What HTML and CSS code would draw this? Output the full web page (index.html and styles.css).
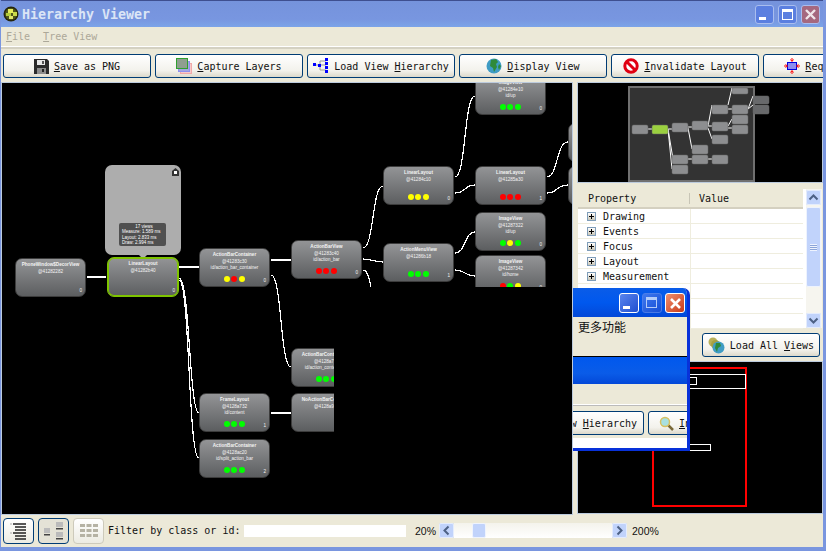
FILE: index.html
```html
<!DOCTYPE html>
<html lang="en">
<head>
    <meta charset="UTF-8">
    <title>Hierarchy Viewer</title>
    <link rel="stylesheet" href="styles.css">
</head>
<body>

<div class="window">
    <div class="titlebar">
        <svg class="app-icon" width="16" height="16" viewBox="0 0 16 16">
            <circle cx="8" cy="8" r="7.5" fill="#26260c"/>
            <circle cx="8" cy="8" r="6" fill="#50561c"/>
            <rect x="5" y="3" width="5" height="4" fill="#e6ec5a"/>
            <rect x="10" y="6" width="4" height="4" fill="#c9d94a"/>
            <rect x="3" y="7" width="5" height="3" fill="#b4cc3a"/>
            <rect x="6" y="10" width="4" height="3" fill="#e0e66a"/>
        </svg>
        <span class="title-text">Hierarchy Viewer</span>
        <div class="caption-buttons">
            <div class="cap-btn"><span class="cap-min"></span></div>
            <div class="cap-btn"><span class="cap-max"></span></div>
            <div class="cap-btn cap-close">
                <svg width="19" height="19" viewBox="0 0 19 19"><path d="M5 5l9 9M14 5l-9 9" stroke="#f0e6ea" stroke-width="2.4"/></svg>
            </div>
        </div>
    </div>

    <div class="menubar">
        <span><u>F</u>ile</span>
        <span><u>T</u>ree View</span>
    </div>

    <div class="toolbar">
        <button class="btn">
            <svg width="15" height="15" viewBox="0 0 15 15"><path d="M0 0h13l2 2v13H0z" fill="#2b2b2b"/><rect x="3" y="1" width="8" height="5" fill="#e8e8e8"/><rect x="8" y="2" width="2" height="3" fill="#555"/><rect x="3" y="9" width="9" height="6" fill="#8c8c8c"/><rect x="8" y="10" width="2" height="3" fill="#222"/></svg>
            <span><u>S</u>ave as PNG</span>
        </button>
        <button class="btn">
            <svg width="16" height="16" viewBox="0 0 16 16"><rect x="4.5" y="5.5" width="11" height="10" fill="#f6c9c9" stroke="#f0a8a8"/><rect x="2.5" y="3.5" width="11" height="10" fill="#a3a6e0" stroke="#8d8ff0"/><rect x="0.5" y="0.5" width="11" height="10" fill="#8f9f90" stroke="#2fa02f"/></svg>
            <span><u>C</u>apture Layers</span>
        </button>
        <button class="btn">
            <svg width="16" height="16" viewBox="0 0 16 16"><path d="M3 7h4M7 3v9M7 3h6M7 7h6M7 12h6" stroke="#999" fill="none"/><rect x="0" y="5" width="3" height="3" fill="#00f"/><rect x="5" y="6" width="3" height="3" fill="#00f"/><rect x="12" y="0" width="3" height="3" fill="#00f"/><rect x="12" y="4" width="3" height="3" fill="#00f"/><rect x="12" y="8" width="3" height="3" fill="#00f"/><rect x="12" y="12" width="3" height="3" fill="#00f"/></svg>
            <span>Load View <u>H</u>ierarchy</span>
        </button>
        <button class="btn">
            <svg width="16" height="16" viewBox="0 0 16 16"><circle cx="8" cy="8" r="7.5" fill="#3f9cc4"/><path d="M5 2l5-1 2 3-2 2 1 3-3 5-1-4-3-2z" fill="#2f8a3a"/><path d="M13 6l2 2-2 4-1-3z" fill="#2f8a3a"/></svg>
            <span><u>D</u>isplay View</span>
        </button>
        <button class="btn">
            <svg width="16" height="16" viewBox="0 0 16 16"><circle cx="8" cy="8" r="6.2" fill="#fff" stroke="#e00012" stroke-width="3"/><path d="M3.5 3.5l9 9" stroke="#e00012" stroke-width="3"/></svg>
            <span><u>I</u>nvalidate Layout</span>
        </button>
        <button class="btn">
            <svg width="16" height="16" viewBox="0 0 16 16"><rect x="3.5" y="4.5" width="9" height="7" fill="#8c8cf0" stroke="#0000e0"/><path d="M8 0v3M6.500 1.500L8 3.500l1.500-2M8 16v-3M6.500 14.500L8 12.500l1.500 2M0 8h3M1.500 6.500L3.500 8l-2 1.500M16 8h-3M14.500 6.500L12.500 8l2 1.500" stroke="#f00" fill="none"/></svg>
            <span><u>R</u>equest Layout</span>
        </button>
    </div>

    <div class="main">
        <div class="panel graph">
            <svg class="links" width="570" height="431" viewBox="2 83 570 431">
                <path d="M87 277H106"/>
                <path d="M179 267H199"/>
                <path d="M179 278C190 278 189 413 199 413"/>
                <path d="M179 280C190 280 188 458 199 458"/>
                <path d="M271 260H291"/>
                <path d="M271 275C282 275 280 367 291 367"/>
                <path d="M363 248C374 248 372 186 383 186"/>
                <path d="M363 259C372 259 374 262 383 262"/>
                <path d="M363 270C368 270 370 280 373 300"/>
                <path d="M455 177C466 177 464 96 475 96"/>
                <path d="M455 193C466 193 464 185 475 185"/>
                <path d="M455 253C466 253 464 232 475 232"/>
                <path d="M455 270C466 270 464 276 475 276"/>
                <path d="M547 177C558 177 556 142 568 142"/>
                <path d="M547 193C558 193 556 185 568 185"/>
                <path d="M271 413H291"/>
            </svg>

            <div class="node n-decor">
                <b>PhoneWindow$DecorView</b><i>@41282282</i><em>0</em>
            </div>

            <div class="detail">
                <svg class="detail-lock" width="9" height="9" viewBox="0 0 9 9"><path d="M1 4l3.500-3L8 4v5H1z" fill="#333"/><rect x="3" y="4" width="3" height="3" fill="#fff"/></svg>
                <div class="timing">
                    <p class="timing-head">17 views</p>
                    <p>Measure: 1.589 ms</p>
                    <p>Layout: 2.833 ms</p>
                    <p>Draw: 2.994 ms</p>
                </div>
            </div>
            <div class="node n-root selected">
                <b>LinearLayout</b><i>@41282b40</i><em>0</em>
            </div>

            <div class="node n-bar">
                <b>ActionBarContainer</b><i>@41283c30</i><i>id/action_bar_container</i>
                <div class="dots"><span class="y"></span><span class="r"></span><span class="y"></span></div><em>0</em>
            </div>
            <div class="node n-barview">
                <b>ActionBarView</b><i>@41283c40</i><i>id/action_bar</i>
                <div class="dots"><span class="r"></span><span class="r"></span><span class="r"></span></div><em>0</em>
            </div>
            <div class="node n-ll1">
                <b>LinearLayout</b><i>@41284c10</i>
                <div class="dots"><span class="y"></span><span class="y"></span><span class="y"></span></div><em>0</em>
            </div>
            <div class="node n-menu">
                <b>ActionMenuView</b><i>@41286b18</i>
                <div class="dots"><span class="g"></span><span class="g"></span><span class="g"></span></div><em>1</em>
            </div>
            <div class="node n-up">
                <b>ImageView</b><i>@41284e10</i><i>id/up</i>
                <div class="dots"><span class="g"></span><span class="g"></span><span class="g"></span></div><em>0</em>
            </div>
            <div class="node n-ll2">
                <b>LinearLayout</b><i>@41285a30</i>
                <div class="dots"><span class="r"></span><span class="r"></span><span class="r"></span></div><em>1</em>
            </div>
            <div class="node n-img1">
                <b>ImageView</b><i>@41287322</i><i>id/up</i>
                <div class="dots"><span class="g"></span><span class="y"></span><span class="g"></span></div><em>0</em>
            </div>
            <div class="node n-img2">
                <b>ImageView</b><i>@41287342</i><i>id/home</i>
                <div class="dots"><span class="r"></span><span class="g"></span><span class="y"></span></div><em>0</em>
            </div>
            <div class="node n-edge1">
                <b>TextView</b><i>@41285c10</i>
            </div>
            <div class="node n-edge2">
                <b>TextView</b><i>@41285e20</i>
            </div>
            <div class="graph-cover"></div>
            <div class="node n-ctx">
                <b>ActionBarContextView</b><i>@4128a712</i><i>id/action_context_bar</i>
                <div class="dots"><span class="g"></span><span class="g"></span><span class="g"></span></div><em>0</em>
            </div>
            <div class="node n-frame">
                <b>FrameLayout</b><i>@4128a732</i><i>id/content</i>
                <div class="dots"><span class="g"></span><span class="g"></span><span class="g"></span></div><em>1</em>
            </div>
            <div class="node n-noaction">
                <b>NoActionBarContainer</b><i>@4128a900</i>
            </div>
            <div class="node n-split">
                <b>ActionBarContainer</b><i>@4128ac20</i><i>id/split_action_bar</i>
                <div class="dots"><span class="g"></span><span class="g"></span><span class="g"></span></div><em>2</em>
            </div>
        </div>

        <div class="side">
            <div class="panel overview">
                <svg width="244" height="99" viewBox="578 83 244 99">
                    <rect x="629" y="87" width="125" height="94" fill="#333" stroke="#707070" stroke-width="2"/>
                    <path class="mini-link" d="M648 129h4M668 129h4M688 127h4M708 126l4-21M708 126h4M708 128l4 11M688 128l4 21M668 129l5 30M668 129l4 40M688 159h4M708 159h4M728 105l4-17M728 109h4M728 126l4-7M728 128h4M748 109l5-13M748 109l5-4"/>
                    <rect class="mini" x="632" y="125" width="16" height="9"/>
                    <rect class="mini active" x="652" y="125" width="16" height="9"/>
                    <rect class="mini" x="672" y="123" width="16" height="9"/>
                    <rect class="mini" x="692" y="121" width="16" height="9"/>
                    <rect class="mini" x="712" y="105" width="16" height="9"/>
                    <rect class="mini" x="712" y="122" width="16" height="9"/>
                    <rect class="mini" x="712" y="135" width="16" height="9"/>
                    <rect class="mini" x="732" y="88" width="16" height="6"/>
                    <rect class="mini" x="732" y="105" width="16" height="9"/>
                    <rect class="mini" x="732" y="115" width="16" height="9"/>
                    <rect class="mini" x="732" y="125" width="16" height="9"/>
                    <rect class="mini" x="692" y="145" width="16" height="9"/>
                    <rect class="mini" x="672" y="155" width="16" height="9"/>
                    <rect class="mini" x="692" y="155" width="16" height="9"/>
                    <rect class="mini" x="712" y="155" width="16" height="9"/>
                    <rect class="mini" x="672" y="165" width="16" height="9"/>
                    <rect class="mini dim" x="753" y="96" width="16" height="8"/>
                    <rect class="mini dim" x="753" y="105" width="16" height="9"/>
                </svg>
            </div>

            <div class="props">
                <div class="props-table">
                    <div class="props-head"><div class="col-name">Property</div><div class="col-value">Value</div></div>
                    <div class="prop-row"><span class="expander"></span><span>Drawing</span></div>
                    <div class="prop-row"><span class="expander"></span><span>Events</span></div>
                    <div class="prop-row"><span class="expander"></span><span>Focus</span></div>
                    <div class="prop-row"><span class="expander"></span><span>Layout</span></div>
                    <div class="prop-row"><span class="expander"></span><span>Measurement</span></div>
                    <div class="prop-row"></div>
                    <div class="prop-row"></div>
                    <div class="prop-row"></div>
                </div>
                <div class="vscroll">
                    <div class="sb-btn">
                        <svg width="15" height="15" viewBox="0 0 15 15"><path d="M3.500 9.500l4-4 4 4" class="chev"/></svg>
                    </div>
                    <div class="sb-thumb"><span></span></div>
                    <div class="sb-track"></div>
                    <div class="sb-btn">
                        <svg width="15" height="15" viewBox="0 0 15 15"><path d="M3.500 5.500l4 4 4-4" class="chev"/></svg>
                    </div>
                </div>
            </div>

            <div class="load-row">
                <button class="btn btn-load">
                    <svg width="17" height="17" viewBox="0 0 17 17"><circle cx="5" cy="5" r="4.500" fill="#b8b05a"/><circle cx="7.500" cy="7.500" r="4.500" fill="#a8a040"/><circle cx="10.500" cy="10.500" r="6" fill="#3f9cc4"/><path d="M8 6l4 0 1 3-3 2-1 4-2-4z" fill="#2f8a3a"/></svg>
                    <span>Load All <u>V</u>iews</span>
                </button>
            </div>

            <div class="panel layout-view">
                <svg width="244" height="151" viewBox="578 363 244 151">
                    <rect class="lv-red" x="653" y="369" width="93" height="138"/>
                    <rect class="lv-white" x="654.500" y="375.500" width="91" height="14"/>
                    <rect class="lv-white" x="654.500" y="378.500" width="42" height="7"/>
                    <rect class="lv-white" x="654.500" y="445.500" width="56" height="6"/>
                </svg>
            </div>
        </div>
    </div>

    <div class="statusbar">
        <button class="mode-btn">
            <svg width="18" height="18" viewBox="0 0 18 18"><path d="M3 2h13M5 5h11M5 8h11M3 11h13M5 14h11M5 17h11" stroke="#222" stroke-width="1.500"/><path d="M0 2h2M0 11h2" stroke="#aaa"/></svg>
        </button>
        <button class="mode-btn pressed">
            <svg width="20" height="18" viewBox="0 0 20 18"><rect x="0" y="6" width="6" height="5" fill="#bbb"/><rect x="0" y="12" width="6" height="1.500" fill="#444"/><rect x="12" y="0" width="7" height="5" fill="#bbb"/><rect x="12" y="6" width="7" height="1.500" fill="#444"/><rect x="12" y="10" width="7" height="5" fill="#bbb"/><rect x="12" y="16" width="7" height="1.500" fill="#444"/></svg>
        </button>
        <button class="mode-btn disabled">
            <svg width="18" height="14" viewBox="0 0 18 14"><g fill="#b5b2a4"><rect width="5" height="3"/><rect x="6.500" width="5" height="3"/><rect x="13" width="5" height="3"/><rect y="5" width="5" height="3"/><rect x="6.500" y="5" width="5" height="3"/><rect x="13" y="5" width="5" height="3"/><rect y="10" width="5" height="3"/><rect x="6.500" y="10" width="5" height="3"/><rect x="13" y="10" width="5" height="3"/></g></svg>
        </button>
        <span class="filter-label">Filter by class or id:</span>
        <div class="filter-input"></div>
        <span class="zoom-label zoom-min">20%</span>
        <div class="hscroll">
            <div class="sb-btn">
                <svg width="15" height="15" viewBox="0 0 15 15"><path d="M9.500 3.500l-4 4 4 4" class="chev"/></svg>
            </div>
            <div class="hs-track"><div class="hs-thumb"></div></div>
            <div class="sb-btn">
                <svg width="15" height="15" viewBox="0 0 15 15"><path d="M5.500 3.500l4 4-4 4" class="chev"/></svg>
            </div>
        </div>
        <span class="zoom-label">200%</span>
    </div>

    <!-- the other window, only partly repainted over this one -->
    <div class="ghost">
        <div class="ghost-title">
            <div class="ghost-btn"><span class="cap-min"></span></div>
            <div class="ghost-btn off"><span class="cap-max"></span></div>
            <div class="ghost-btn ghost-close">
                <svg width="19" height="19" viewBox="0 0 19 19"><path d="M5 5l9 9M14 5l-9 9" stroke="#fff" stroke-width="2.600"/></svg>
            </div>
        </div>
        <div class="ghost-menu">更多功能</div>
        <div class="ghost-bar"></div>
        <div class="ghost-gap"></div>
        <div class="ghost-tools">
            <button class="btn ghost-b1"><span>w <u>H</u>ierarchy</span></button>
            <button class="btn ghost-b2">
                <svg width="15" height="15" viewBox="0 0 15 15"><path d="M9 9l5 5" stroke="#7a6a3a" stroke-width="2.500"/><circle cx="6" cy="6" r="4.500" fill="#a8e0e0" stroke="#d8c060" stroke-width="1.500"/></svg>
                <span><u>I</u>nspect</span>
            </button>
        </div>
        <div class="ghost-white"></div>
    </div>
</div>

</body>
</html>
```

FILE: styles.css
```css
html, body {
    margin: 0;
    padding: 0;
}
body {
    width: 826px;
    height: 551px;
    overflow: hidden;
    font-family: "DejaVu Sans Mono", "Liberation Mono", monospace;
    font-size: 10px;
    color: #111;
}
.window {
    position: relative;
    width: 826px;
    height: 551px;
    box-sizing: border-box;
    overflow: hidden;
    display: flex;
    flex-direction: column;
    background-color: #ece9d8;
    border-left: 1px solid #7a96df;
    border-right: 3px solid #7a96df;
    border-bottom: 4px solid #7a96df;
}

/* title bar */
.titlebar {
    height: 27px;
    flex: none;
    display: flex;
    align-items: center;
    padding-left: 2px;
    box-sizing: border-box;
    border-top: 1px solid #3e4f90;
    background: linear-gradient(#7593dc, #7896e0 70%, #7ca4e8);
}
.app-icon {
    flex: none;
}
.title-text {
    margin-left: 3px;
    width: 130px;
    font-size: 13.3px;
    font-weight: bold;
    color: #dbe5f6;
}
.caption-buttons {
    margin-left: auto;
    margin-right: 3px;
    display: flex;
    gap: 4px;
}
.cap-btn {
    width: 19px;
    height: 19px;
    box-sizing: border-box;
    border: 1px solid #a9bdee;
    border-radius: 3px;
    background-color: #5b7fe0;
    position: relative;
    display: flex;
    align-items: center;
    justify-content: center;
}
.cap-min {
    position: absolute;
    left: 3px;
    bottom: 3px;
    width: 7px;
    height: 3px;
    background-color: #fff;
}
.cap-max {
    position: absolute;
    left: 3px;
    top: 3px;
    width: 11px;
    height: 11px;
    box-sizing: border-box;
    border: 1px solid #fff;
    border-top-width: 3px;
}
.cap-close {
    background-color: #a5687f;
}
.cap-close svg {
    position: absolute;
    left: -1px;
    top: -1px;
}

/* menu + toolbar */
.menubar {
    height: 19px;
    flex: none;
    display: flex;
    align-items: center;
    gap: 13px;
    padding-left: 5px;
    color: #aca899;
    border-bottom: 1px solid #fff;
    box-shadow: 0 2px 0 #d4d1c2;
}
.toolbar {
    height: 36px;
    flex: none;
    box-sizing: border-box;
    padding: 7px 0 0 2px;
    display: flex;
    gap: 4px;
    overflow: hidden;
}
.btn {
    width: 148px;
    height: 24px;
    flex: none;
    padding: 0;
    box-sizing: border-box;
    display: flex;
    align-items: center;
    justify-content: center;
    gap: 5px;
    border: 1px solid #003c74;
    border-radius: 3px;
    background: linear-gradient(#ffffff, #f3f2ec 70%, #dcd9cb);
    font-family: inherit;
    font-size: 10px;
    color: #111;
}

/* main area */
.main {
    height: 431px;
    flex: none;
    display: flex;
    padding-left: 1px;
    gap: 6px;
}
.panel {
    background-color: #000;
    outline: 1px solid #bccbdd;
}
.graph {
    position: relative;
    width: 570px;
    height: 431px;
    overflow: hidden;
}
.links {
    position: absolute;
    left: 0;
    top: 0;
}
.links path {
    fill: none;
    stroke: #fff;
    stroke-width: 1.2;
    shape-rendering: crispEdges;
}
.graph-cover {
    position: absolute;
    left: 332px;
    top: 204px;
    right: 0;
    bottom: 0;
    background-color: #000;
}

/* graph nodes */
.node {
    position: absolute;
    width: 71px;
    height: 39px;
    box-sizing: border-box;
    padding-top: 3px;
    border: 1px solid #3c3c3c;
    border-radius: 7px;
    background: linear-gradient(#939496, #5c5e60);
    color: #f4f4f4;
    font-family: "Liberation Sans", sans-serif;
    font-size: 4.600px;
    line-height: 6.500px;
    text-align: center;
    white-space: nowrap;
    overflow: hidden;
}
.node b, .node i {
    display: block;
    font-style: normal;
}
.node em {
    position: absolute;
    right: 3px;
    bottom: 2px;
    font-style: normal;
}
.dots {
    position: absolute;
    left: 24px;
    top: 27px;
    display: flex;
    gap: 1.300px;
}
.dots span {
    width: 6px;
    height: 6px;
    border-radius: 50%;
}
.dots .r { background-color: #f00; }
.dots .g { background-color: #0f0; }
.dots .y { background-color: #ff0; }
.selected {
    border: 1px solid #7ec400;
    box-shadow: inset 0 0 0 1px #7ec400;
}

.n-decor { left: 13px; top: 175px; }
.n-root { left: 105px; top: 174px; width: 72px; height: 40px; }
.n-bar { left: 197px; top: 165px; }
.n-barview { left: 289px; top: 157px; }
.n-ll1 { left: 381px; top: 83px; }
.n-menu { left: 381px; top: 160px; }
.n-up { left: 473px; top: -7px; }
.n-ll2 { left: 473px; top: 83px; }
.n-img1 { left: 473px; top: 129px; }
.n-img2 { left: 473px; top: 172px; }
.n-edge1 { left: 566px; top: 40px; }
.n-edge2 { left: 566px; top: 83px; }
.n-ctx { left: 289px; top: 265px; }
.n-frame { left: 197px; top: 310px; }
.n-noaction { left: 289px; top: 310px; }
.n-split { left: 197px; top: 356px; }
.n-ctx, .n-noaction {
    clip-path: inset(-1px 28px -1px -1px);
}

/* the timing bubble over the selected node */
.detail {
    position: absolute;
    left: 103px;
    top: 82px;
    width: 76px;
    height: 90px;
    border-radius: 7px;
    background-color: #adadad;
}
.detail::after {
    content: "";
    position: absolute;
    left: 34px;
    bottom: -4px;
    border-left: 4px solid transparent;
    border-right: 4px solid transparent;
    border-top: 4px solid #adadad;
}
.detail-lock {
    position: absolute;
    right: 1px;
    top: 2px;
}
.timing {
    position: absolute;
    left: 14px;
    top: 58px;
    width: 47px;
    height: 23px;
    box-sizing: border-box;
    padding: 1px 0 0 3px;
    border-radius: 2px;
    background-color: #505050;
    color: #fff;
    font-family: "Liberation Sans", sans-serif;
    font-size: 4.500px;
    line-height: 5.300px;
    white-space: nowrap;
}
.timing p {
    margin: 0;
}
.timing-head {
    text-align: center;
}

/* right column */
.side {
    width: 244px;
    flex: none;
    display: flex;
    flex-direction: column;
}
.overview {
    height: 99px;
    flex: none;
}
.overview svg, .layout-view svg {
    display: block;
}
.mini {
    fill: #8d8e90;
    stroke: #666;
    stroke-width: 0.500;
    rx: 1.500px;
}
.mini.active {
    fill: #9bd040;
}
.mini.dim {
    fill: #68696b;
}
.mini-link {
    fill: none;
    stroke: #fff;
    stroke-width: 1;
}

.props {
    margin-top: 7px;
    height: 139px;
    flex: none;
    display: flex;
    background-color: #fff;
}
.props-table {
    width: 225px;
    flex: none;
}
.props-head {
    height: 20px;
    box-sizing: border-box;
    padding-top: 1px;
    display: flex;
    align-items: center;
    background-color: #ece9d8;
    border-bottom: 2px solid #d4d0c0;
}
.col-name {
    width: 112px;
    box-sizing: border-box;
    padding-left: 10px;
    border-right: 1px solid #c8c5b6;
}
.col-value {
    padding-left: 9px;
}
.prop-row {
    height: 15px;
    box-sizing: border-box;
    display: flex;
    align-items: center;
    padding-left: 9px;
    gap: 7px;
    border-bottom: 1px solid #efedde;
    background: linear-gradient(to right, #fff 112px, #efedde 112px, #efedde 113px, #fff 113px);
}
.expander {
    position: relative;
    width: 9px;
    height: 9px;
    box-sizing: border-box;
    border: 1px solid #7f9db9;
    background: linear-gradient(#fff, #c8c5b6);
}
.expander::before {
    content: "";
    position: absolute;
    left: 1px;
    top: 3px;
    width: 5px;
    height: 1px;
    background-color: #000;
}
.expander::after {
    content: "";
    position: absolute;
    left: 3px;
    top: 1px;
    width: 1px;
    height: 5px;
    background-color: #000;
}
.vscroll {
    width: 16px;
    margin-left: 3px;
    display: flex;
    flex-direction: column;
    padding-top: 1px;
    background-color: #f6f5ef;
}
.sb-btn {
    width: 15px;
    height: 15px;
    flex: none;
    border-radius: 2px;
    background-color: #c1d3fb;
    box-shadow: inset 0 0 0 1px #e4ecfd;
}
.sb-btn svg {
    display: block;
}
.chev {
    fill: none;
    stroke: #4d6185;
    stroke-width: 2;
}
.sb-thumb {
    width: 15px;
    height: 80px;
    flex: none;
    margin-top: 2px;
    box-sizing: border-box;
    border: 1px solid #eef3fe;
    border-radius: 2px;
    background-color: #c1d3fb;
    display: flex;
    align-items: center;
    justify-content: center;
}
.sb-thumb span {
    width: 7px;
    height: 7px;
    background: repeating-linear-gradient(#eef3fe 0 1px, #8ca5d8 1px 2px);
}
.sb-track {
    flex: 1;
}
.load-row {
    height: 34px;
    flex: none;
    display: flex;
    justify-content: flex-end;
    align-items: center;
    padding-right: 2px;
}
.btn-load {
    width: 118px;
}
.layout-view {
    height: 151px;
    flex: none;
}
.lv-red {
    fill: none;
    stroke: #f00;
    stroke-width: 2;
}
.lv-white {
    fill: none;
    stroke: #fff;
    stroke-width: 1;
}

/* bottom bar */
.statusbar {
    height: 33px;
    flex: none;
    display: flex;
    align-items: center;
    padding: 0 0 0 2px;
    box-sizing: border-box;
}
.mode-btn {
    width: 31px;
    height: 26px;
    margin-right: 4px;
    padding: 0;
    box-sizing: border-box;
    display: flex;
    align-items: center;
    justify-content: center;
    border: 1px solid #003c74;
    border-radius: 4px;
    background: linear-gradient(#fff, #ecebe2);
}
.mode-btn.pressed {
    background: #e4e2d6;
}
.mode-btn.disabled {
    border-color: #cdcabb;
}
.filter-label {
    width: 136px;
    flex: none;
}
.filter-input {
    width: 162px;
    height: 12px;
    flex: none;
    background-color: #fff;
}
.zoom-label {
    font-family: "Liberation Sans", sans-serif;
    font-size: 10.500px;
    margin-left: 5px;
}
.zoom-min {
    margin-left: 9px;
    margin-right: 5px;
    width: 19px;
    flex: none;
}
.hscroll {
    width: 188px;
    height: 15px;
    flex: none;
    display: flex;
}
.hs-track {
    flex: 1;
    position: relative;
    background: linear-gradient(#f4f3ec, #fff);
}
.hs-thumb {
    position: absolute;
    left: 18px;
    top: 0;
    width: 14px;
    height: 15px;
    box-sizing: border-box;
    border: 1px solid #eef3fe;
    border-radius: 2px;
    background-color: #c1d3fb;
}

/* second window on top */
.ghost {
    position: absolute;
    left: 572px;
    top: 288px;
    width: 117px;
    height: 163px;
    box-sizing: border-box;
    display: flex;
    flex-direction: column;
    border-right: 3px solid #0831d9;
    border-bottom: 3px solid #0831d9;
    border-top-right-radius: 7px;
    overflow: hidden;
    background-color: #ece9d8;
}
.ghost-title {
    height: 29px;
    flex: none;
    display: flex;
    justify-content: flex-end;
    align-items: center;
    gap: 3px;
    padding-right: 2px;
    box-sizing: border-box;
    background: linear-gradient(#0a5ce8, #0058ee 50%, #0348d8);
}
.ghost-btn {
    position: relative;
    width: 20px;
    height: 20px;
    box-sizing: border-box;
    border: 1px solid #fff;
    border-radius: 3px;
    background: linear-gradient(135deg, #5a85ee, #1f4fd0);
}
.ghost-btn.off {
    border-color: #6a8ee8;
    opacity: 0.700;
}
.ghost-close {
    background: linear-gradient(135deg, #f09070, #c83a18);
}
.ghost-close svg {
    position: absolute;
    left: 0;
    top: 0;
}
.ghost-menu {
    height: 40px;
    flex: none;
    box-sizing: border-box;
    padding: 1px 0 0 5px;
    font-family: "Noto Sans CJK SC", sans-serif;
    font-size: 12px;
    line-height: 17px;
    color: #111;
    border-bottom: 1px solid #000;
}
.ghost-bar {
    height: 27px;
    flex: none;
    background: linear-gradient(#0058ee, #0a5ce8 60%, #0348d8);
}
.ghost-gap {
    height: 20px;
    flex: none;
    border-bottom: 1px solid #fff;
    box-shadow: 0 1px 0 #bbb;
}
.ghost-tools {
    height: 33px;
    flex: none;
    box-sizing: border-box;
    padding-top: 6px;
    display: flex;
    gap: 4px;
    margin-left: -75px;
}
.ghost-b1 {
    width: 146px;
    justify-content: flex-end;
    padding-right: 6px;
}
.ghost-b2 {
    width: 80px;
    justify-content: flex-start;
    padding-left: 10px;
}
.ghost-white {
    flex: 1;
    background-color: #fff;
}
```
